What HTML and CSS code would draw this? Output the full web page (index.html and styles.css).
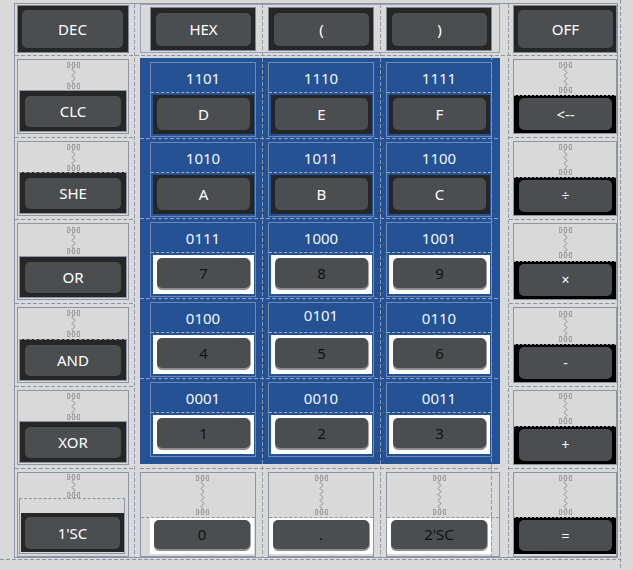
FILE: index.html
```html
<!DOCTYPE html>
<html>
<head>
<meta charset="utf-8">
<title>Calculator form</title>
<link rel="stylesheet" href="styles.css">
</head>
<body>
<svg class="defs" aria-hidden="true">
  <defs>
    <symbol id="cap" viewBox="0 0 13 6">
      <g fill="none" stroke="#a3a3a3" stroke-width="1">
        <rect x="0.5" y="0.5" width="2" height="5"/>
        <rect x="5.5" y="0.5" width="2" height="5"/>
        <rect x="10.5" y="0.5" width="2" height="5"/>
        <path d="M3 3H5M8 3H10"/>
      </g>
    </symbol>
    <pattern id="zz" width="13" height="6" patternUnits="userSpaceOnUse">
      <path d="M6.5 0L5 1.5L6.5 3L8 4.5L6.5 6" fill="none" stroke="#8a8a8a" stroke-width="1"/>
    </pattern>
  </defs>
</svg>

<div class="page">
  <div class="form">
    <div class="vl vl-a"></div>
    <div class="vl vl-b"></div>
    <div class="vl vl-c"></div>
    <div class="vl vl-d"></div>
    <div class="vl vl-e"></div>

    <!-- top row -->
    <div class="sidetop dec"><div class="btn">DEC</div></div>
    <div class="topbox">
      <div class="tf"><div class="btn">HEX</div></div>
      <div class="tf"><div class="btn">(</div></div>
      <div class="tf"><div class="btn">)</div></div>
    </div>
    <div class="sidetop off"><div class="btn">OFF</div></div>

    <div class="hl-top"></div>

    <!-- left column -->
    <div class="lcol">
      <div class="lc h75">
        <div class="sparea"><div class="spacer sp-l"><svg class="cap"><use href="#cap"/></svg><svg class="zig"><rect width="100%" height="100%" fill="url(#zz)"/></svg><svg class="cap"><use href="#cap"/></svg></div></div>
        <div class="lframe"><div class="btn">CLC</div></div>
      </div>
      <div class="hs"></div>
      <div class="lc h75">
        <div class="sparea"><div class="spacer sp-l"><svg class="cap"><use href="#cap"/></svg><svg class="zig"><rect width="100%" height="100%" fill="url(#zz)"/></svg><svg class="cap"><use href="#cap"/></svg></div></div>
        <div class="lframe dtop"><div class="btn">SHE</div></div>
      </div>
      <div class="hs"></div>
      <div class="lc h77">
        <div class="sparea"><div class="spacer sp-l"><svg class="cap"><use href="#cap"/></svg><svg class="zig"><rect width="100%" height="100%" fill="url(#zz)"/></svg><svg class="cap"><use href="#cap"/></svg></div></div>
        <div class="lframe"><div class="btn">OR</div></div>
      </div>
      <div class="hs"></div>
      <div class="lc h76">
        <div class="sparea"><div class="spacer sp-l"><svg class="cap"><use href="#cap"/></svg><svg class="zig"><rect width="100%" height="100%" fill="url(#zz)"/></svg><svg class="cap"><use href="#cap"/></svg></div></div>
        <div class="lframe dtop"><div class="btn">AND</div></div>
      </div>
      <div class="hs"></div>
      <div class="lc h75">
        <div class="sparea"><div class="spacer sp-l"><svg class="cap"><use href="#cap"/></svg><svg class="zig"><rect width="100%" height="100%" fill="url(#zz)"/></svg><svg class="cap"><use href="#cap"/></svg></div></div>
        <div class="lframe"><div class="btn">XOR</div></div>
      </div>
      <div class="hs"></div>
      <div class="lc h85">
        <div class="sparea"><div class="spacer sp-sc"><svg class="cap"><use href="#cap"/></svg><svg class="zig"><rect width="100%" height="100%" fill="url(#zz)"/></svg><svg class="cap"><use href="#cap"/></svg></div></div>
        <div class="scbox"><div class="scfr"><div class="btn">1'SC</div></div></div>
      </div>
    </div>

    <!-- middle -->
    <div class="mid">
      <div class="blue">
        <div class="brow">
          <div class="bcell"><div class="blabel">1101</div><div class="fr hx"><div class="btn">D</div></div></div>
          <div class="bcell"><div class="blabel">1110</div><div class="fr hx"><div class="btn">E</div></div></div>
          <div class="bcell"><div class="blabel">1111</div><div class="fr hx"><div class="btn">F</div></div></div>
        </div>
        <div class="bhs"></div>
        <div class="brow">
          <div class="bcell"><div class="blabel">1010</div><div class="fr hx"><div class="btn">A</div></div></div>
          <div class="bcell"><div class="blabel">1011</div><div class="fr hx"><div class="btn">B</div></div></div>
          <div class="bcell"><div class="blabel">1100</div><div class="fr hx"><div class="btn">C</div></div></div>
        </div>
        <div class="bhs"></div>
        <div class="brow">
          <div class="bcell"><div class="blabel">0111</div><div class="fr nm"><div class="btn nbtn">7</div></div></div>
          <div class="bcell"><div class="blabel">1000</div><div class="fr nm"><div class="btn nbtn">8</div></div></div>
          <div class="bcell"><div class="blabel">1001</div><div class="fr nm"><div class="btn nbtn">9</div></div></div>
        </div>
        <div class="bhs"></div>
        <div class="brow">
          <div class="bcell"><div class="blabel">0100</div><div class="fr nm"><div class="btn nbtn">4</div></div></div>
          <div class="bcell"><div class="blabel up">0101</div><div class="fr nm"><div class="btn nbtn">5</div></div></div>
          <div class="bcell"><div class="blabel">0110</div><div class="fr nm"><div class="btn nbtn">6</div></div></div>
        </div>
        <div class="bhs"></div>
        <div class="brow">
          <div class="bcell"><div class="blabel">0001</div><div class="fr nm"><div class="btn nbtn">1</div></div></div>
          <div class="bcell"><div class="blabel">0010</div><div class="fr nm"><div class="btn nbtn">2</div></div></div>
          <div class="bcell"><div class="blabel">0011</div><div class="fr nm"><div class="btn nbtn">3</div></div></div>
        </div>
      </div>
      <div class="mhs"></div>
      <div class="bottom">
        <div class="bc b0">
          <div class="bsp"><div class="spacer sp-b"><svg class="cap"><use href="#cap"/></svg><svg class="zig"><rect width="100%" height="100%" fill="url(#zz)"/></svg><svg class="cap"><use href="#cap"/></svg></div></div>
          <div class="bfr"><div class="btn nbtn">0</div></div>
        </div>
        <div class="bc b1">
          <div class="bsp"><div class="spacer sp-b"><svg class="cap"><use href="#cap"/></svg><svg class="zig"><rect width="100%" height="100%" fill="url(#zz)"/></svg><svg class="cap"><use href="#cap"/></svg></div></div>
          <div class="bfr"><div class="btn nbtn">.</div></div>
        </div>
        <div class="bc b2">
          <div class="bsp"><div class="spacer sp-b"><svg class="cap"><use href="#cap"/></svg><svg class="zig"><rect width="100%" height="100%" fill="url(#zz)"/></svg><svg class="cap"><use href="#cap"/></svg></div></div>
          <div class="bfr"><div class="btn nbtn">2'SC</div></div>
        </div>
      </div>
    </div>

    <!-- right column -->
    <div class="rcol">
      <div class="rc h75">
        <div class="sparea"><div class="spacer sp-r"><svg class="cap"><use href="#cap"/></svg><svg class="zig"><rect width="100%" height="100%" fill="url(#zz)"/></svg><svg class="cap"><use href="#cap"/></svg></div></div>
        <div class="rframe"><div class="btn">&lt;--</div></div>
      </div>
      <div class="hs"></div>
      <div class="rc h75">
        <div class="sparea"><div class="spacer sp-r"><svg class="cap"><use href="#cap"/></svg><svg class="zig"><rect width="100%" height="100%" fill="url(#zz)"/></svg><svg class="cap"><use href="#cap"/></svg></div></div>
        <div class="rframe"><div class="btn sym">÷</div></div>
      </div>
      <div class="hs"></div>
      <div class="rc h77">
        <div class="sparea"><div class="spacer sp-r"><svg class="cap"><use href="#cap"/></svg><svg class="zig"><rect width="100%" height="100%" fill="url(#zz)"/></svg><svg class="cap"><use href="#cap"/></svg></div></div>
        <div class="rframe"><div class="btn sym">×</div></div>
      </div>
      <div class="hs"></div>
      <div class="rc h76">
        <div class="sparea"><div class="spacer sp-r"><svg class="cap"><use href="#cap"/></svg><svg class="zig"><rect width="100%" height="100%" fill="url(#zz)"/></svg><svg class="cap"><use href="#cap"/></svg></div></div>
        <div class="rframe"><div class="btn sym">-</div></div>
      </div>
      <div class="hs"></div>
      <div class="rc h75">
        <div class="sparea"><div class="spacer sp-r"><svg class="cap"><use href="#cap"/></svg><svg class="zig"><rect width="100%" height="100%" fill="url(#zz)"/></svg><svg class="cap"><use href="#cap"/></svg></div></div>
        <div class="rframe"><div class="btn sym">+</div></div>
      </div>
      <div class="hs"></div>
      <div class="rc h85">
        <div class="sparea"><div class="spacer sp-b"><svg class="cap"><use href="#cap"/></svg><svg class="zig"><rect width="100%" height="100%" fill="url(#zz)"/></svg><svg class="cap"><use href="#cap"/></svg></div></div>
        <div class="rframe eq"><div class="btn sym">=</div></div>
      </div>
    </div>
  </div>
  <div class="guide-h"></div>
</div>
</body>
</html>
```

FILE: styles.css
```css
* { box-sizing: border-box; }

html, body {
  margin: 0;
  padding: 0;
  background: #d9d9d9;
  font-family: "Noto Sans", "Liberation Sans", sans-serif;
  font-size: 15px;
  overflow: hidden;
}

.defs {
  position: absolute;
  width: 0;
  height: 0;
  overflow: hidden;
}

.page {
  width: 621px;
  height: 570px;
  display: flex;
  flex-direction: column;
  background: repeating-linear-gradient(to bottom, #8b95a5 0 4px, transparent 4px 6px) right top / 1px 100% no-repeat;
}

.guide-h {
  margin-top: 1px;
  height: 1px;
  width: 620px;
  background: repeating-linear-gradient(to right, #8b95a5 0 4px, transparent 4px 6px);
}

.form {
  display: grid;
  grid-template-columns: 2px 112px 5px 1px 5px 10px 106px 6px 1px 5px 106px 6px 1px 4px 106px 1px 8px 8px 1px 4px 104px;
  grid-template-rows: 51px 1px 501px;
  margin: 3px 0 0 14px;
  width: 604px;
  height: 555px;
  border: 1px solid #8b95a5;
}

/* layout guide lines */
.vl {
  grid-row: 1 / -1;
  width: 1px;
  z-index: 3;
  background: repeating-linear-gradient(to bottom, #8e99ab 0 4px, transparent 4px 6px);
}
.vl-a { grid-column: 4; }
.vl-b { grid-column: 9; }
.vl-c { grid-column: 13; }
.vl-d { grid-column: 16; grid-row: 3; }
.vl-e { grid-column: 19; }

.hl-top {
  grid-row: 2;
  grid-column: 1 / -1;
  height: 1px;
  background: repeating-linear-gradient(to right, #8b95a5 0 4px, transparent 4px 6px);
}

.hs {
  height: 1px;
  margin: 3px 0;
  background: repeating-linear-gradient(to right, #8b95a5 0 4px, transparent 4px 6px);
}

/* buttons */
.btn {
  flex: 1;
  display: flex;
  align-items: center;
  justify-content: center;
  background: #4b4e51;
  border-radius: 5px;
  color: #ffffff;
  font-size: 15px;
  line-height: 1;
  white-space: nowrap;
}
.nbtn {
  color: #111111;
  box-shadow: 0 2px 0 #8e8e8e, 1px 1px 0 #a0a0a0;
}
.sym { font-size: 14px; }

/* top row */
.sidetop {
  grid-row: 1;
  align-self: start;
  margin-top: 1px;
  height: 48px;
  display: flex;
  border: 1px solid #7e8796;
  background: #262626;
}
.dec { grid-column: 2; padding: 4px 5px 4px 4px; }
.off { grid-column: 21; padding: 4px 3px 4px 4px; }

.topbox {
  grid-row: 1;
  grid-column: 6 / 18;
  align-self: start;
  height: 49px;
  border: 1px solid #9aa3b1;
  padding: 2px 0 1px 9px;
  display: grid;
  grid-template-columns: repeat(3, 106px);
  column-gap: 12px;
}
.tf {
  height: 44px;
  display: flex;
  border: 1px solid #7e8796;
  background: #262626;
  padding: 5px 4px 4px 5px;
}

/* side columns */
.lcol {
  grid-row: 3;
  grid-column: 1 / 4;
  display: flex;
  flex-direction: column;
  padding-top: 3px;
}
.lcol .lc { margin: 0 5px 0 2px; }

.rcol {
  grid-row: 3;
  grid-column: 20 / 22;
  display: flex;
  flex-direction: column;
  padding-top: 3px;
}
.rcol .rc { margin-left: 4px; }

.h75 { height: 75px; }
.h76 { height: 76px; }
.h77 { height: 77px; }
.h85 { height: 85px; }

.lc, .rc {
  border: 1px solid #8b95a5;
  display: flex;
  flex-direction: column;
}

.sparea {
  flex: 1;
  display: flex;
  align-items: center;
  justify-content: center;
}

.spacer {
  display: flex;
  flex-direction: column;
  align-items: center;
}
.cap { display: block; width: 13px; height: 6px; }
.zig { display: block; width: 13px; }
.sp-l .zig { height: 15px; }
.sp-r .zig { height: 19px; }
.sp-sc .zig { height: 12px; }
.sp-b .zig { height: 28px; }

.lframe {
  height: 42px;
  margin: 0 1px 1px;
  border: 1px solid #8b95a5;
  background: #262626;
  padding: 5px 5px 4px;
  display: flex;
}
.lframe.dtop { border-top-style: dashed; }

.scbox {
  height: 56px;
  margin: 0 3px 2px 1px;
  border: 1px solid #8b95a5;
  border-top-style: dashed;
  padding: 14px 0 1px 1px;
}
.scfr {
  height: 39px;
  background: #262626;
  padding: 4px 4px 3px 4px;
  display: flex;
}

.rframe {
  height: 38px;
  background: repeating-linear-gradient(to right, #8b95a5 0 2px, #000 2px 4px) left top / 100% 1px no-repeat, #000000;
  padding: 3px 4px 3px 5px;
  display: flex;
}
.rframe.eq {
  height: 37px;
  margin-bottom: 2px;
}

/* middle */
.mid {
  grid-row: 3;
  grid-column: 6 / 18;
  display: flex;
  flex-direction: column;
  padding-top: 2px;
}

.blue {
  height: 406px;
  background: #245294;
  padding: 4px 0 7px;
  display: flex;
  flex-direction: column;
}

.brow {
  height: 75px;
  padding-left: 10px;
  display: grid;
  grid-template-columns: repeat(3, 106px);
  column-gap: 12px;
}

.bhs {
  height: 1px;
  margin: 1px 0 3px;
  background: repeating-linear-gradient(to right, #93a5c2 0 4px, transparent 4px 6px);
}

.bcell {
  height: 75px;
  border: 1px solid #6f8cb8;
  display: flex;
  flex-direction: column;
}

.blabel {
  height: 30px;
  border-bottom: 1px dashed #9cb0cc;
  display: flex;
  align-items: center;
  justify-content: center;
  color: #f4f6fa;
  font-size: 15px;
}
.blabel.up { padding-bottom: 6px; }

.fr {
  height: 39px;
  margin: 2px 1px 2px 2px;
  display: flex;
}
.hx {
  background: #262626;
  padding: 3px 4px 4px;
}
.nm {
  background: #ffffff;
  padding: 3px 4px 6px;
}

.mhs {
  height: 1px;
  margin: 4px 0 3px;
  background: repeating-linear-gradient(to right, #8b95a5 0 4px, transparent 4px 6px);
}

.bottom {
  height: 85px;
  display: grid;
  grid-template-columns: 116px 106px 114px;
  column-gap: 12px;
}

.bc {
  border: 1px solid #8b95a5;
  display: flex;
  flex-direction: column;
}
.bsp {
  height: 45px;
  border-bottom: 1px dashed #8b95a5;
  display: flex;
  align-items: center;
  justify-content: center;
}
.bfr {
  height: 36px;
  background: #ffffff;
  padding: 2px 4px 5px;
  display: flex;
}
.b0 .bsp { padding: 0 1px 0 9px; }
.b0 .bfr { margin: 0 1px 0 9px; }
.b2 .bsp { padding-right: 8px; }
.b2 .bfr { margin-right: 8px; }
```
